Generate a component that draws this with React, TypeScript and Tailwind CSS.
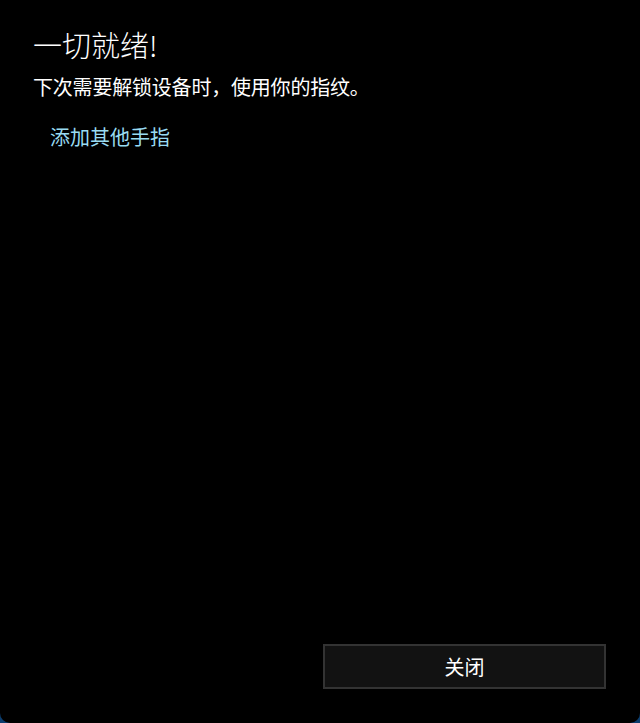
export default function App() {
	return (
		<div className="h-[723px] w-[640px] bg-[#0b3d6e]">
			<div
				className="flex h-full flex-col rounded-b-[10px] bg-black text-white"
				style={{ fontFamily: '"Noto Sans CJK SC", "Noto Sans", sans-serif' }}
			>
				<div className="px-[33px] pt-[26px]">
					<h1 className="text-[29px] leading-[36px] font-light">一切就绪!</h1>
					<p className="mt-[12px] text-[20px] leading-[26px] tracking-[-0.2px]">
						下次需要解锁设备时，使用你的指纹。
					</p>
					<button className="mt-[24px] ml-[17px] text-[20px] leading-[26px] text-[#99dbf2]">
						添加其他手指
					</button>
				</div>

				<div className="mt-auto flex justify-end px-[34px] pb-[34px]">
					<button className="h-[45px] w-[283px] border-2 border-[#333333] bg-[#121212] text-[20px] text-white">
						关闭
					</button>
				</div>
			</div>
		</div>
	);
}
